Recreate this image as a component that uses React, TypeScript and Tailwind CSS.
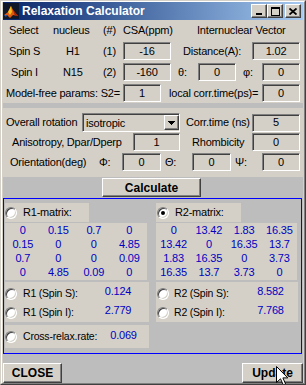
import React from "react";

// Win2000 style MATLAB figure: Relaxation Calculator

const r1 = [
  ["0", "0.15", "0.7", "0"],
  ["0.15", "0", "0", "4.85"],
  ["0.7", "0", "0", "0.09"],
  ["0", "4.85", "0.09", "0"],
];

const r2 = [
  ["0", "13.42", "1.83", "16.35"],
  ["13.42", "0", "16.35", "13.7"],
  ["1.83", "16.35", "0", "3.73"],
  ["16.35", "13.7", "3.73", "0"],
];

function Edit({ v, w }: { v: string; w: string }) {
  return (
    <div
      className={`${w} h-[18px] shrink-0 flex items-center justify-center bg-[#d4d0c8] border border-t-[#808080] border-l-[#808080] border-r-white border-b-white shadow-[inset_1px_1px_0_#404040] text-black`}
    >
      {v}
    </div>
  );
}

function Radio({ on }: { on?: boolean }) {
  return (
    <span className="w-[12px] h-[12px] shrink-0 rounded-full bg-white border border-t-[#808080] border-l-[#808080] border-r-white border-b-white shadow-[inset_1px_1px_0_#404040,inset_-1px_-1px_0_#d4d0c8] flex items-center justify-center">
      {on && <span className="w-[4px] h-[4px] rounded-full bg-black" />}
    </span>
  );
}

function Matrix({ rows, w }: { rows: string[][]; w: string }) {
  return (
    <div className={`${w} h-[57px] mt-[1px] bg-[#d4d0c8] grid grid-cols-4 content-start text-[#0000c0]`}>
      {rows.flat().map((v, i) => (
        <div key={i} className="h-[14px] leading-[14px] text-center">
          {v}
        </div>
      ))}
    </div>
  );
}

function RateRow({ label, value, lw, vw, gap }: { label: string; value: string; lw: string; vw: string; gap: string }) {
  return (
    <div className="h-[19px] flex items-center">
      <Radio />
      <span className={`${gap} ${lw} shrink-0 text-[10.5px]`}>{label}</span>
      <span className={`${vw} shrink-0 text-center text-[#0000c0] pb-[5px]`}>{value}</span>
    </div>
  );
}

function TitleBtn({ children, className }: { children: React.ReactNode; className?: string }) {
  return (
    <div
      className={`w-[16px] h-[14px] bg-[#d4d0c8] border border-t-white border-l-white border-r-[#404040] border-b-[#404040] shadow-[inset_-1px_-1px_0_#808080] flex items-center justify-center ${className ?? ""}`}
    >
      {children}
    </div>
  );
}

export default function App() {
  return (
    <div className="relative w-[306px] h-[385px] overflow-hidden bg-[#d4d0c8] border border-t-[#d4d0c8] border-l-[#d4d0c8] border-r-[#404040] border-b-[#404040] font-['Liberation_Sans',Arial,sans-serif] text-[11px] tracking-[-0.2px] leading-none text-black select-none">
      <div className="h-full flex flex-col border border-t-white border-l-white border-r-[#808080] border-b-[#808080] px-[1px]">
        {/* title bar */}
        <div className="h-[18px] shrink-0 flex items-center bg-linear-to-r from-[#0a246a] to-[#a6caf0]">
          <svg width="16" height="16" viewBox="0 0 16 16" className="shrink-0">
            <rect width="16" height="16" fill="#10182a" />
            <polygon points="1,12 5,9 8,3 10,7 15,13 10,12 7,15 4,12" fill="#e05a10" />
            <polygon points="5,9 8,3 9,9 7,12" fill="#f8c020" />
            <polygon points="10,7 15,13 12,13" fill="#a02008" />
            <polygon points="1,12 4,12 3,14" fill="#3060c0" />
          </svg>
          <span className="ml-[3px] text-white font-bold text-[12px] tracking-normal">Relaxation Calculator</span>
          <div className="ml-auto flex items-center mr-[2px]">
            <TitleBtn>
              <svg width="8" height="8" viewBox="0 0 8 8" shapeRendering="crispEdges">
                <rect x="1" y="6" width="6" height="2" fill="#000" />
              </svg>
            </TitleBtn>
            <TitleBtn>
              <svg width="9" height="9" viewBox="0 0 9 9" shapeRendering="crispEdges">
                <rect x="0" y="0" width="9" height="2" fill="#000" />
                <rect x="0" y="0" width="1" height="9" fill="#000" />
                <rect x="8" y="0" width="1" height="9" fill="#000" />
                <rect x="0" y="8" width="9" height="1" fill="#000" />
              </svg>
            </TitleBtn>
            <TitleBtn className="ml-[2px]">
              <svg width="8" height="7" viewBox="0 0 8 7">
                <path d="M0.5 0.5 L7.5 6.5 M7.5 0.5 L0.5 6.5" stroke="#000" strokeWidth="1.8" />
              </svg>
            </TitleBtn>
          </div>
        </div>

        {/* client area */}
        <div className="flex-1 flex flex-col bg-[#bdbdbd]">
          {/* spins panel */}
          <div className="h-[83px] shrink-0 bg-[#d4d0c8] flex flex-col">
            <div className="h-[20px] flex items-center pl-[6px]">
              <span className="w-[44px] shrink-0">Select</span>
              <span className="w-[50px] shrink-0">nucleus</span>
              <span className="w-[20px] shrink-0">(#)</span>
              <span className="w-[74px] shrink-0">CSA(ppm)</span>
              <span>Internuclear Vector</span>
            </div>
            <div className="h-[18px] mt-[2px] flex items-center pl-[6px]">
              <span className="w-[57px] shrink-0">Spin S</span>
              <span className="w-[37px] shrink-0">H1</span>
              <span className="w-[20px] shrink-0">(1)</span>
              <Edit v="-16" w="w-[48px]" />
              <span className="w-[12px] shrink-0" />
              <span className="w-[69px] shrink-0">Distance(A):</span>
              <Edit v="1.02" w="w-[48px]" />
            </div>
            <div className="h-[18px] mt-[3px] flex items-center pl-[8px]">
              <span className="w-[52px] shrink-0">Spin I</span>
              <span className="w-[40px] shrink-0">N15</span>
              <span className="w-[20px] shrink-0">(2)</span>
              <Edit v="-160" w="w-[48px]" />
              <span className="w-[7px] shrink-0" />
              <span className="w-[20px] shrink-0">θ:</span>
              <Edit v="0" w="w-[38px]" />
              <span className="w-[7px] shrink-0" />
              <span className="w-[19px] shrink-0">φ:</span>
              <Edit v="0" w="w-[38px]" />
            </div>
            <div className="h-[18px] mt-[3px] flex items-center pl-[3px]">
              <span className="w-[117px] shrink-0">Model-free params: S2=</span>
              <Edit v="1" w="w-[38px]" />
              <span className="w-[8px] shrink-0" />
              <span className="w-[93px] shrink-0">local corr.time(ps)=</span>
              <Edit v="0" w="w-[38px]" />
            </div>
          </div>

          {/* diffusion panel */}
          <div className="h-[69px] mt-[5px] shrink-0 bg-[#d4d0c8] flex flex-col pt-[5px]">
            <div className="h-[19px] flex items-center pl-[3px]">
              <span className="w-[76px] shrink-0">Overall rotation</span>
              <div className="w-[98px] h-[19px] shrink-0 flex items-center bg-[#d4d0c8] border border-t-[#808080] border-l-[#808080] border-r-white border-b-white shadow-[inset_1px_1px_0_#404040] pl-[3px]">
                <span className="flex-1 pt-[2px]">isotropic</span>
                <div className="w-[15px] h-[15px] bg-[#d4d0c8] border border-t-white border-l-white border-r-[#404040] border-b-[#404040] shadow-[inset_-1px_-1px_0_#808080] flex items-center justify-center">
                  <svg width="7" height="4" viewBox="0 0 7 4" shapeRendering="crispEdges">
                    <polygon points="0,0 7,0 3.5,4" fill="#000" />
                  </svg>
                </div>
              </div>
              <span className="w-[6px] shrink-0" />
              <span className="w-[66px] shrink-0">Corr.time (ns)</span>
              <Edit v="5" w="w-[48px]" />
            </div>
            <div className="h-[18px] mt-[1px] flex items-center pl-[9px]">
              <span className="w-[121px] shrink-0">Anisotropy, Dpar/Dperp</span>
              <Edit v="1" w="w-[47px]" />
              <span className="w-[12px] shrink-0" />
              <span className="w-[60px] shrink-0">Rhombicity</span>
              <Edit v="0" w="w-[48px]" />
            </div>
            <div className="h-[18px] mt-[2px] flex items-center pl-[7px]">
              <span className="w-[89px] shrink-0">Orientation(deg)</span>
              <span className="w-[23px] shrink-0">Φ:</span>
              <Edit v="0" w="w-[39px]" />
              <span className="w-[4px] shrink-0" />
              <span className="w-[27px] shrink-0">Θ:</span>
              <Edit v="0" w="w-[39px]" />
              <span className="w-[4px] shrink-0" />
              <span className="w-[27px] shrink-0">Ψ:</span>
              <Edit v="0" w="w-[38px]" />
            </div>
          </div>

          {/* calculate */}
          <div className="h-[21px] shrink-0 pt-[1px]">
            <button className="ml-[99px] w-[99px] h-[19px] bg-[#d4d0c8] border border-t-white border-l-white border-r-[#404040] border-b-[#404040] shadow-[inset_-1px_-1px_0_#808080] font-bold text-[12px] tracking-normal flex items-center justify-center">
              Calculate
            </button>
          </div>

          {/* results */}
          <div className="h-[156px] w-[299px] shrink-0 border border-[#0000ff] flex gap-[7px] pl-[1px] pt-[4px]">
            <div className="w-[144px] flex flex-col">
              <div className="w-[84px] h-[19px] bg-[#d4d0c8] flex items-center">
                <Radio />
                <span className="ml-[6px]">R1-matrix:</span>
              </div>
              <Matrix rows={r1} w="w-[142px]" />
              <div className="h-[40px] mt-[2px] bg-[#d4d0c8] pt-[2px] flex flex-col">
                <RateRow label="R1 (Spin S):" value="0.124" gap="ml-[6px]" lw="w-[77px]" vw="w-[36px]" />
                <RateRow label="R1 (Spin I):" value="2.779" gap="ml-[6px]" lw="w-[77px]" vw="w-[36px]" />
              </div>
              <div className="h-[23px] mt-[3px] bg-[#d4d0c8] flex items-center">
                <Radio />
                <span className="ml-[6px] w-[82px] shrink-0 text-[10.5px]">Cross-relax.rate:</span>
                <span className="w-[37px] shrink-0 text-center text-[#0000c0] pb-[3px]">0.069</span>
              </div>
            </div>
            <div className="w-[142px] flex flex-col">
              <div className="w-[85px] h-[19px] bg-[#d4d0c8] flex items-center pl-[1px]">
                <Radio on />
                <span className="ml-[6px]">R2-matrix:</span>
              </div>
              <Matrix rows={r2} w="w-[141px]" />
              <div className="h-[40px] mt-[2px] bg-[#d4d0c8] pt-[2px] pl-[1px] flex flex-col">
                <RateRow label="R2 (Spin S):" value="8.582" gap="ml-[5px]" lw="w-[78px]" vw="w-[37px]" />
                <RateRow label="R2 (Spin I):" value="7.768" gap="ml-[5px]" lw="w-[78px]" vw="w-[37px]" />
              </div>
            </div>
          </div>

          {/* bottom buttons */}
          <div className="h-[20px] mt-[9px] shrink-0 flex justify-between">
            <button className="w-[59px] h-[20px] bg-[#d4d0c8] border border-t-white border-l-white border-r-[#404040] border-b-[#404040] shadow-[inset_-1px_-1px_0_#808080] font-bold text-[12px] tracking-normal flex items-center justify-center">
              CLOSE
            </button>
            <button className="w-[61px] h-[20px] bg-[#d4d0c8] border border-t-white border-l-white border-r-[#404040] border-b-[#404040] shadow-[inset_-1px_-1px_0_#808080] font-bold text-[12px] tracking-normal flex items-center justify-center">
              Update
            </button>
          </div>
        </div>
      </div>

      {/* mouse pointer over Update */}
      <svg width="13" height="20" viewBox="0 0 13 20" className="absolute left-[275px] top-[365px]">
        <path d="M0.5 0.5 L0.5 16.5 L4.5 12.8 L7.3 19 L9.6 18 L6.9 11.9 L11.8 11.9 Z" fill="#fff" stroke="#000" strokeWidth="1" />
      </svg>
    </div>
  );
}
